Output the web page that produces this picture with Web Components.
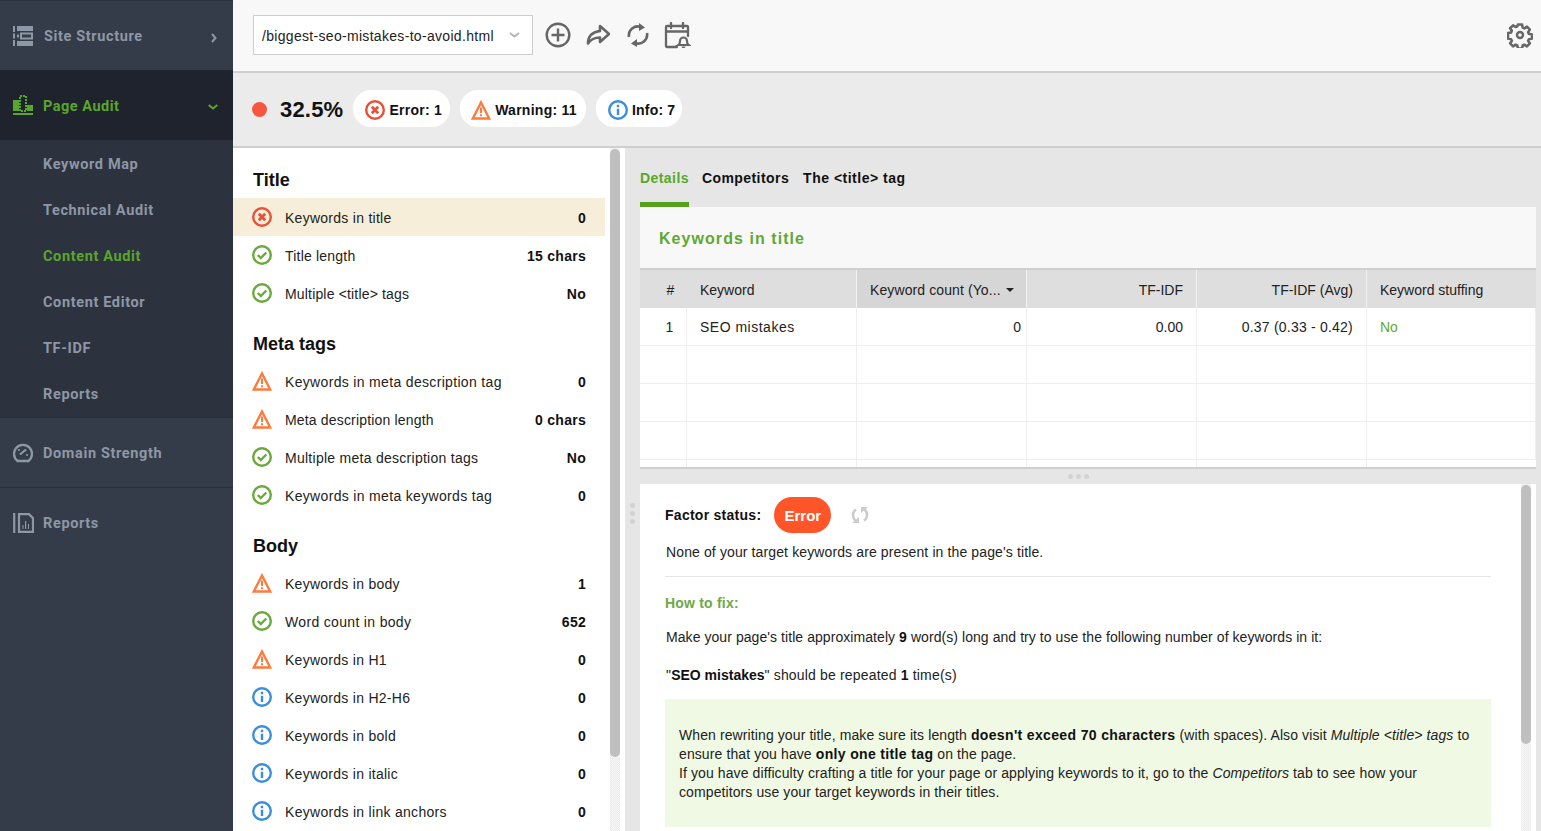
<!DOCTYPE html>
<html><head><meta charset="utf-8"><title>Page Audit</title>
<style>
html,body{margin:0;padding:0;height:831px;overflow:hidden;background:#e6e6e6}
body{font:14px/19px "Liberation Sans",Arial,sans-serif;color:#111}
</style></head><body>
<audit-app></audit-app>
<script>
const ICONS={
 structure:'<svg width="20" height="20" viewBox="0 0 20 20"><path fill="currentColor" d="M0 0h2v6H0zM0 7.500h2v5H0zM0 14h2v6H0zM4 0h16v5H4zM4 15h16v5H4zM4 8.500h2v3H4z"/><path fill="none" stroke="currentColor" stroke-width="2" d="M8 7.500h11v5H8z"/></svg>',
 audit:'<svg width="20" height="20" viewBox="0 0 20 20"><path fill="currentColor" d="M0 5h6v11H0zM14 10h6v6h-6zM0 18h20v2H0z"/><path fill="none" stroke="currentColor" stroke-width="2" stroke-dasharray="2 1" d="M7 1h6v15H7z"/></svg>',
 gauge:'<svg width="20" height="20" viewBox="0 0 20 20"><path fill="none" stroke="currentColor" stroke-width="2.400" d="M4.500 18a9 9 0 1 1 11 0z"/><path fill="none" stroke="currentColor" stroke-width="2.200" d="M7 11.500l6-5"/><circle cx="6" cy="7" r="1.100" fill="currentColor"/><circle cx="14" cy="12" r="1.100" fill="currentColor"/></svg>',
 reports:'<svg width="21" height="20" viewBox="0 0 21 20"><path fill="none" stroke="currentColor" stroke-width="2.200" d="M1.200 0v20M6 1.100h10l4 4v13.800H6z"/><path fill="currentColor" d="M9.500 12h1v4h-1zM12 8h1.200v8H12zM15 11h1v5h-1z"/></svg>',
 plus:'<svg width="26" height="26" viewBox="0 0 26 26"><circle cx="13" cy="13" r="11.300" fill="none" stroke="#666" stroke-width="2.400"/><path d="M13 6.500v13M6.500 13h13" stroke="#666" stroke-width="2.400" fill="none"/></svg>',
 share:'<svg width="24" height="22" viewBox="0 0 24 22"><path fill="none" stroke="#666" stroke-width="2.600" stroke-linejoin="round" d="M14 2l9 8-9 8v-4.500c-5 0-9 1.500-12 6 0-7 4-11.500 12-12.500z"/></svg>',
 sync:'<svg width="22" height="26" viewBox="0 0 22 26"><path fill="none" stroke="#666" stroke-width="2.600" d="M2 15a9 9 0 0 1 12-10M20 11a9 9 0 0 1-12 10"/><path fill="#666" d="M12 1l6 4.500L12 9zM10 17l-6 4.500L10 25z"/></svg>',
 cal:'<svg width="27" height="27" viewBox="0 0 27 27"><path fill="none" stroke="#666" stroke-width="2.300" stroke-linecap="round" d="M13 25H3a1 1 0 0 1-1-1V5a1 1 0 0 1 1-1h20a1 1 0 0 1 1 1v9M2 9.500h22M7 1v5M19 1v5"/><path fill="none" stroke="#666" stroke-width="2.200" d="M14.500 23c1.500-1 1.500-2 1.500-4a3.500 3.500 0 0 1 7 0c0 2 0 3 1.500 4z"/><path fill="#666" d="M17.500 24.500h4c0 2-4 2-4 0z"/></svg>',
 gear:'<svg width="26" height="26" viewBox="0 0 26 26"><path fill="none" stroke="#666" stroke-width="2.700" stroke-linejoin="round" d="M10.800 2h4.400l.6 3.200 1.800.8 2.700-1.800 3.100 3.100-1.800 2.700.8 1.800 3.200.6v4.400l-3.200.6-.8 1.800 1.800 2.700-3.100 3.100-2.700-1.800-1.800.8-.6 3.200h-4.400l-.6-3.200-1.800-.8-2.700 1.800-3.100-3.100 1.800-2.700-.8-1.800-3.200-.6V11l3.200-.6.8-1.800-1.800-2.700 3.100-3.100 2.700 1.800 1.800-.8z" transform="translate(.65 .65) scale(.95)"/><circle cx="13" cy="13" r="3" fill="none" stroke="#666" stroke-width="2.400"/></svg>',
 error:'<svg width="20" height="20" viewBox="0 0 20 20"><circle cx="10" cy="10" r="8.800" fill="none" stroke="#e8503a" stroke-width="2.400"/><path d="M6.800 6.800l6.400 6.400M13.200 6.800l-6.400 6.400" stroke="#e8503a" stroke-width="2.800" fill="none"/></svg>',
 ok:'<svg width="20" height="20" viewBox="0 0 20 20"><circle cx="10" cy="10" r="8.800" fill="none" stroke="#6aa93d" stroke-width="2.400"/><path d="M5.800 10l3 3 5.500-5.500" stroke="#6aa93d" stroke-width="2.400" fill="none"/></svg>',
 warn:'<svg width="20" height="20" viewBox="0 0 20 20"><path d="M10 2.500L1.800 18.500h16.400z" fill="none" stroke="#ff7a3d" stroke-width="2.400" stroke-linejoin="miter"/><path d="M9 7.500h2v5.500H9zM9 14.300h2v2H9z" fill="#ff7a3d"/></svg>',
 info:'<svg width="20" height="20" viewBox="0 0 20 20"><circle cx="10" cy="10" r="8.800" fill="none" stroke="#3a8edb" stroke-width="2.400"/><path d="M8.800 4.800h2.400v2.400H8.800zM8.800 8.800h2.400V15H8.800z" fill="#3a8edb"/></svg>',
 re:'<svg width="18" height="18" viewBox="0 0 18 18"><path fill="none" stroke="#ccc" stroke-width="2.600" d="M5 15C1 12 1 6 5 3.500M13 3c4 3 4 9 0 11.500"/><path fill="#ccc" d="M1 17h7v-6zM17 1h-7v6z"/></svg>'
};
const TRACK='background-color:#f6f6f6;background-image:repeating-conic-gradient(#ececec 0 25%,transparent 0 50%);background-size:2px 2px;';
customElements.define('nav-item',class extends HTMLElement{
 connectedCallback(){
  if(this.shadowRoot)return;
  const icon=this.getAttribute('icon'),chev=this.getAttribute('chev');
  this.attachShadow({mode:'open'}).innerHTML=`<style>
  :host{display:flex;align-items:center;height:69px;padding:0 15px 0 13px;color:#8d97a6;font:700 14.500px Roboto,sans-serif;letter-spacing:.63px;box-sizing:border-box}
  :host([active]){color:#5aa62a;background:#1e232e;height:70px;letter-spacing:.5px}
  :host([sub]){height:46px;padding-left:43px}
  :host([bordered]){border-top:1px solid #2a303b;height:70px}
  .i{width:${icon==='structure'?31:30}px;display:flex;flex:none}
  .t{flex:1;padding-top:2px}
  svg.c{flex:none;margin-top:4px}
  svg.r{margin-right:1px}
  </style>${icon?`<span class="i">${ICONS[icon]}</span>`:''}<span class="t"><slot></slot></span>${chev==='r'?'<svg class="c r" width="6" height="10" viewBox="0 0 6 10"><path d="M1 1l3.500 4L1 9" fill="none" stroke="currentColor" stroke-width="2"/></svg>':chev==='d'?'<svg class="c" width="10" height="6" viewBox="0 0 10 6"><path d="M.7 1l4.300 3.500L9.300 1" fill="none" stroke="currentColor" stroke-width="2"/></svg>':''}`;
 }
});
customElements.define('side-bar',class extends HTMLElement{
 constructor(){super();this.attachShadow({mode:'open'}).innerHTML=`<style>
 :host{display:block;width:233px;flex:none;background:#353c49;height:831px}
 .sub{background:#2c333f;height:277px;box-sizing:border-box}
 </style>
 <nav-item icon="structure" chev="r" style="height:70px;border-top:1px solid #2c323d">Site Structure</nav-item>
 <nav-item icon="audit" chev="d" active>Page Audit</nav-item>
 <div class="sub">
 <nav-item sub>Keyword Map</nav-item><nav-item sub>Technical Audit</nav-item>
 <nav-item sub style="color:#5aa62a">Content Audit</nav-item><nav-item sub>Content Editor</nav-item>
 <nav-item sub>TF-IDF</nav-item><nav-item sub>Reports</nav-item></div>
 <nav-item icon="gauge" bordered>Domain Strength</nav-item>
 <nav-item icon="reports" bordered>Reports</nav-item>`;}
});
customElements.define('top-bar',class extends HTMLElement{
 constructor(){super();this.attachShadow({mode:'open'}).innerHTML=`<style>
 :host{display:flex;align-items:center;height:73px;box-sizing:border-box;background:#f8f8f8;border-bottom:2px solid #cfcfcf;padding:0 8px 1px 20px}
 .sel{width:280px;height:40px;box-sizing:border-box;border:1px solid #cdcdcd;background:#fff;display:flex;align-items:center;padding:0 12px 0 8px;font-size:14px;letter-spacing:.31px;color:#222;margin-right:12px}
 .sel span{flex:1;white-space:nowrap;padding-top:2px}
 .ic{display:flex;justify-content:center;flex:none}
 .sp{flex:1}
 </style><div class="sel"><span>/biggest-seo-mistakes-to-avoid.html</span><svg width="11" height="6" viewBox="0 0 11 6"><path d="M1 1l4.500 3.500L10 1" fill="none" stroke="#b5b5b5" stroke-width="2"/></svg></div>
 <span class="ic" style="width:26px;margin-right:14px">${ICONS.plus}</span><span class="ic" style="width:26px;margin-right:14px">${ICONS.share}</span><span class="ic" style="width:26px;margin-right:13px">${ICONS.sync}</span><span class="ic" style="width:27px">${ICONS.cal}</span><span class="sp"></span><span class="ic" style="width:26px">${ICONS.gear}</span>`;}
});
customElements.define('count-pill',class extends HTMLElement{
 connectedCallback(){ if(this.shadowRoot)return;
  this.attachShadow({mode:'open'}).innerHTML=`<style>
  :host{display:inline-flex;align-items:center;height:37px;border-radius:18px;background:#fff;padding:0 8px 0 12px;font:bold 14px "Liberation Sans",sans-serif;letter-spacing:.27px;color:#111;gap:4px;white-space:nowrap}
  :host([kind=warn]){padding:0 9px 0 11px}
  :host([kind=info]){padding:0 7px 0 12px;letter-spacing:.2px}
  svg{display:block;margin-top:3px}span{padding-top:3px}</style>${ICONS[this.getAttribute('kind')]}<span><slot></slot></span>`;}
});
customElements.define('score-bar',class extends HTMLElement{
 constructor(){super();this.attachShadow({mode:'open'}).innerHTML=`<style>
 :host{display:flex;align-items:center;height:75px;box-sizing:border-box;background:#ebebeb;border-bottom:2px solid #cfcfcf;padding:0 0 3px 19px}
 .dot{width:15px;height:15px;border-radius:50%;background:#f8553f;margin:2px 13px 0 0}
 .v{font:bold 22px "Liberation Sans",sans-serif;color:#111;margin-right:10px;letter-spacing:.2px;padding-top:4px}
 count-pill{margin-right:10px}
 </style><span class="dot"></span><span class="v">32.5%</span>
 <count-pill kind="error">Error: 1</count-pill><count-pill kind="warn">Warning: 11</count-pill><count-pill kind="info">Info: 7</count-pill>`;}
});
customElements.define('audit-row',class extends HTMLElement{
 connectedCallback(){ if(this.shadowRoot)return;
  this.attachShadow({mode:'open'}).innerHTML=`<style>
  :host{display:flex;align-items:center;height:38px;padding:0 19px 0 19px;font-size:14px;letter-spacing:.27px;color:#222;box-sizing:border-box}
  :host([sel]){background:#f6eed8}
  .i{width:33px;display:flex;flex:none}
  .t{flex:1;padding-top:2px}
  b{font-weight:bold;padding-top:2px;color:#111;letter-spacing:.27px}
  </style><span class="i">${ICONS[this.getAttribute('kind')]}</span><span class="t"><slot></slot></span><b>${this.getAttribute('val')}</b>`;}
});
customElements.define('audit-head',class extends HTMLElement{
 constructor(){super();this.attachShadow({mode:'open'}).innerHTML=`<style>
 :host{display:flex;align-items:center;height:36px;padding-top:2px;margin-top:12px;padding-left:20px;font:bold 18px "Liberation Sans",sans-serif;color:#111}
 </style><slot></slot>`;}
});
customElements.define('audit-list',class extends HTMLElement{
 constructor(){super();this.attachShadow({mode:'open'}).innerHTML=`<style>
 :host{display:flex;width:392px;flex:none;background:#fff;height:100%;overflow:hidden;position:relative}
 .l{width:372px;flex:none;}
 .tr{position:absolute;left:377px;top:0;width:10px;height:100%;${TRACK}}
 .sb{position:absolute;left:377px;top:1px;width:10px;height:608px;background:#bfbfbf;border-radius:5px}
 </style><div class="l"><slot></slot></div><div class="tr"></div><div class="sb"></div>`;}
});
customElements.define('detail-tabs',class extends HTMLElement{
 constructor(){super();this.attachShadow({mode:'open'}).innerHTML=`<style>
 :host{display:flex;height:59px;font:bold 14px "Liberation Sans",sans-serif;letter-spacing:.43px;color:#111;gap:13px;background:#e6e6e6}
 span{display:block;padding-top:22px;height:59px;box-sizing:border-box}
 span:last-child{margin-left:1px;letter-spacing:.5px}
 .on{color:#5aa62a;border-bottom:5px solid #55a01d}
 </style><span class="on">Details</span><span>Competitors</span><span>The &lt;title&gt; tag</span>`;}
});
customElements.define('kw-table',class extends HTMLElement{
 constructor(){super();
 const rows=[['1','SEO mistakes','0','0.00','0.37 (0.33 - 0.42)','No'],['','','','','',''],['','','','','',''],['','','','','',''],['','','','','','']];
 this.attachShadow({mode:'open'}).innerHTML=`<style>
 :host{display:block;background:#fff;height:260px;overflow:hidden;border-bottom:2px solid #cfcfcf;box-sizing:content-box;font-size:14px;color:#222}
 .title{height:61px;padding-top:2px;box-sizing:border-box;background:#f8f8f8;padding-left:19px;display:flex;align-items:center;font:bold 16px "Liberation Sans",sans-serif;letter-spacing:1.06px;color:#5fa833;}
 .g{display:grid;grid-template-columns:47px 170px 170px 170px 170px 1fr;}
 .hd{border-top:2px solid #cfcfcf;box-sizing:border-box}
 .h{height:38px;padding-top:2px;background:#dedede;display:flex;align-items:center;padding-left:13px;padding-right:13px;box-sizing:border-box;border-right:1px solid #f3f3f3;white-space:nowrap}
 .h.no{justify-content:center;padding:2px 0 0 14px}
 .h.s{background:#d6d6d6;justify-content:space-between;padding-right:12px;letter-spacing:.1px}
 .h.r{justify-content:flex-end}
 .h:last-child{border:0}
 .c{height:38px;padding-top:2px;box-sizing:border-box;border-right:1px solid #eee;border-bottom:1px solid #eee;display:flex;align-items:center;padding-left:13px;padding-right:13px;white-space:nowrap}
 .c:last-child{border-right:0}
 .c.n{justify-content:center;padding:2px 0 0 13px}
 .c.k{letter-spacing:.5px}
 .c.r{justify-content:flex-end;padding-right:5px}
 .c.r2{justify-content:flex-end;padding-right:13px}
 .c.a{letter-spacing:.22px}
 .g2{height:160px;overflow:hidden}
 </style><div class="title">Keywords in title</div>
 <div class="g hd"><div class="h no" style="border-right:0">#</div><div class="h">Keyword</div><div class="h s"><span>Keyword count (Yo...</span><svg width="8" height="4" viewBox="0 0 8 4"><path d="M0 0h8L4 4z" fill="#222"/></svg></div><div class="h r">TF-IDF</div><div class="h r">TF-IDF (Avg)</div><div class="h">Keyword stuffing</div></div>
 <div class="g g2">${rows.map(r=>`<div class="c n">${r[0]}</div><div class="c k">${r[1]}</div><div class="c r">${r[2]}</div><div class="c r2">${r[3]}</div><div class="c r2 a">${r[4]}</div><div class="c" style="color:#5fa833">${r[5]}</div>`).join('')}</div>`;}
});
customElements.define('factor-panel',class extends HTMLElement{
 constructor(){super();this.attachShadow({mode:'open'}).innerHTML=`<style>
 :host{display:block;background:#fff;flex:1;position:relative;overflow:hidden;padding:13px 45px 0 25px;font-size:14px;line-height:19px;color:#222}
 .st{display:flex;align-items:center;height:36px;font-weight:bold;color:#111;letter-spacing:.27px}
 .pill{display:flex;align-items:center;justify-content:center;width:57px;height:36px;border-radius:18px;background:#ff5529;color:#fff;margin:0 20px 0 13px;font-size:15px;letter-spacing:0}
 p{margin:0;padding-left:1px}
 hr{border:0;border-top:1px solid #e5e5e5;margin:14px 0 17px}
 .fix{font-weight:bold;color:#6fa844;letter-spacing:.2px}
 .box{background:#f0f9e3;height:128px;box-sizing:border-box;margin-top:14px;padding:27px 14px 0 14px;color:#222;letter-spacing:.1px}
 .box b{letter-spacing:.35px}
 .tr{position:absolute;left:881px;top:0;width:10px;height:100%;${TRACK}}
 .sb{position:absolute;left:881px;top:1px;width:10px;height:259px;border-radius:5px;background:#bfbfbf}
 b{color:#111}
 </style>
 <div class="st">Factor status:<span class="pill">Error</span>${ICONS.re}</div>
 <p style="margin-top:10px;letter-spacing:.12px">None of your target keywords are present in the page's title.</p>
 <hr>
 <div class="fix">How to fix:</div>
 <p style="margin-top:15px;letter-spacing:.065px">Make your page's title approximately <b>9</b> word(s) long and try to use the following number of keywords in it:</p>
 <p style="margin-top:19px;letter-spacing:.17px">"<b style="letter-spacing:0">SEO mistakes</b>" should be repeated <b>1</b> time(s)</p>
 <div class="box">When rewriting your title, make sure its length <b>doesn't exceed 70 characters</b> (with spaces). Also visit <i>Multiple &lt;title&gt; tags</i> to<br>ensure that you have <b>only one title tag</b> on the page.<br>If you have difficulty crafting a title for your page or applying keywords to it, go to the <i>Competitors</i> tab to see how your<br>competitors use your target keywords in their titles.</div>
 <div class="tr"></div><div class="sb"></div>`;}
});
customElements.define('detail-pane',class extends HTMLElement{
 constructor(){super();this.attachShadow({mode:'open'}).innerHTML=`<style>
 :host{display:flex;flex-direction:column;flex:1;min-width:0;background:#e6e6e6;padding:0 5px 0 15px;height:100%;box-sizing:border-box;position:relative}
 .split{height:15px;flex:none;display:flex;justify-content:center;align-items:center;gap:3px;padding-right:20px}
 .split i,.v i{display:block;width:5px;height:5px;border-radius:50%;background:#d2d2d2}
 .v{position:absolute;left:5px;top:355px;display:flex;flex-direction:column;gap:3px}
 </style><detail-tabs></detail-tabs><kw-table></kw-table><div class="split"><i></i><i></i><i></i></div><factor-panel></factor-panel><div class="v"><i></i><i></i><i></i></div>`;}
});
customElements.define('audit-app',class extends HTMLElement{
 constructor(){super();this.attachShadow({mode:'open'}).innerHTML=`<style>
 :host{display:flex;width:1541px;height:831px;overflow:hidden}
 .m{flex:1;min-width:0;display:flex;flex-direction:column}
 .b{display:flex;height:683px;}
 </style><side-bar></side-bar><div class="m"><top-bar></top-bar><score-bar></score-bar><div class="b">
 <audit-list>
 <audit-head>Title</audit-head>
 <audit-row kind="error" val="0" sel>Keywords in title</audit-row>
 <audit-row kind="ok" val="15 chars" style="letter-spacing:.2px">Title length</audit-row>
 <audit-row kind="ok" val="No" style="letter-spacing:.17px">Multiple &lt;title&gt; tags</audit-row>
 <audit-head>Meta tags</audit-head>
 <audit-row kind="warn" val="0" style="letter-spacing:.33px">Keywords in meta description tag</audit-row>
 <audit-row kind="warn" val="0 chars" style="letter-spacing:.17px">Meta description length</audit-row>
 <audit-row kind="ok" val="No">Multiple meta description tags</audit-row>
 <audit-row kind="ok" val="0" style="letter-spacing:.33px">Keywords in meta keywords tag</audit-row>
 <audit-head>Body</audit-head>
 <audit-row kind="warn" val="1">Keywords in body</audit-row>
 <audit-row kind="ok" val="652" style="letter-spacing:.33px">Word count in body</audit-row>
 <audit-row kind="warn" val="0">Keywords in H1</audit-row>
 <audit-row kind="info" val="0">Keywords in H2-H6</audit-row>
 <audit-row kind="info" val="0">Keywords in bold</audit-row>
 <audit-row kind="info" val="0">Keywords in italic</audit-row>
 <audit-row kind="info" val="0" style="letter-spacing:.29px">Keywords in link anchors</audit-row>
 </audit-list><detail-pane></detail-pane></div></div>`;}
});
</script></body></html>
